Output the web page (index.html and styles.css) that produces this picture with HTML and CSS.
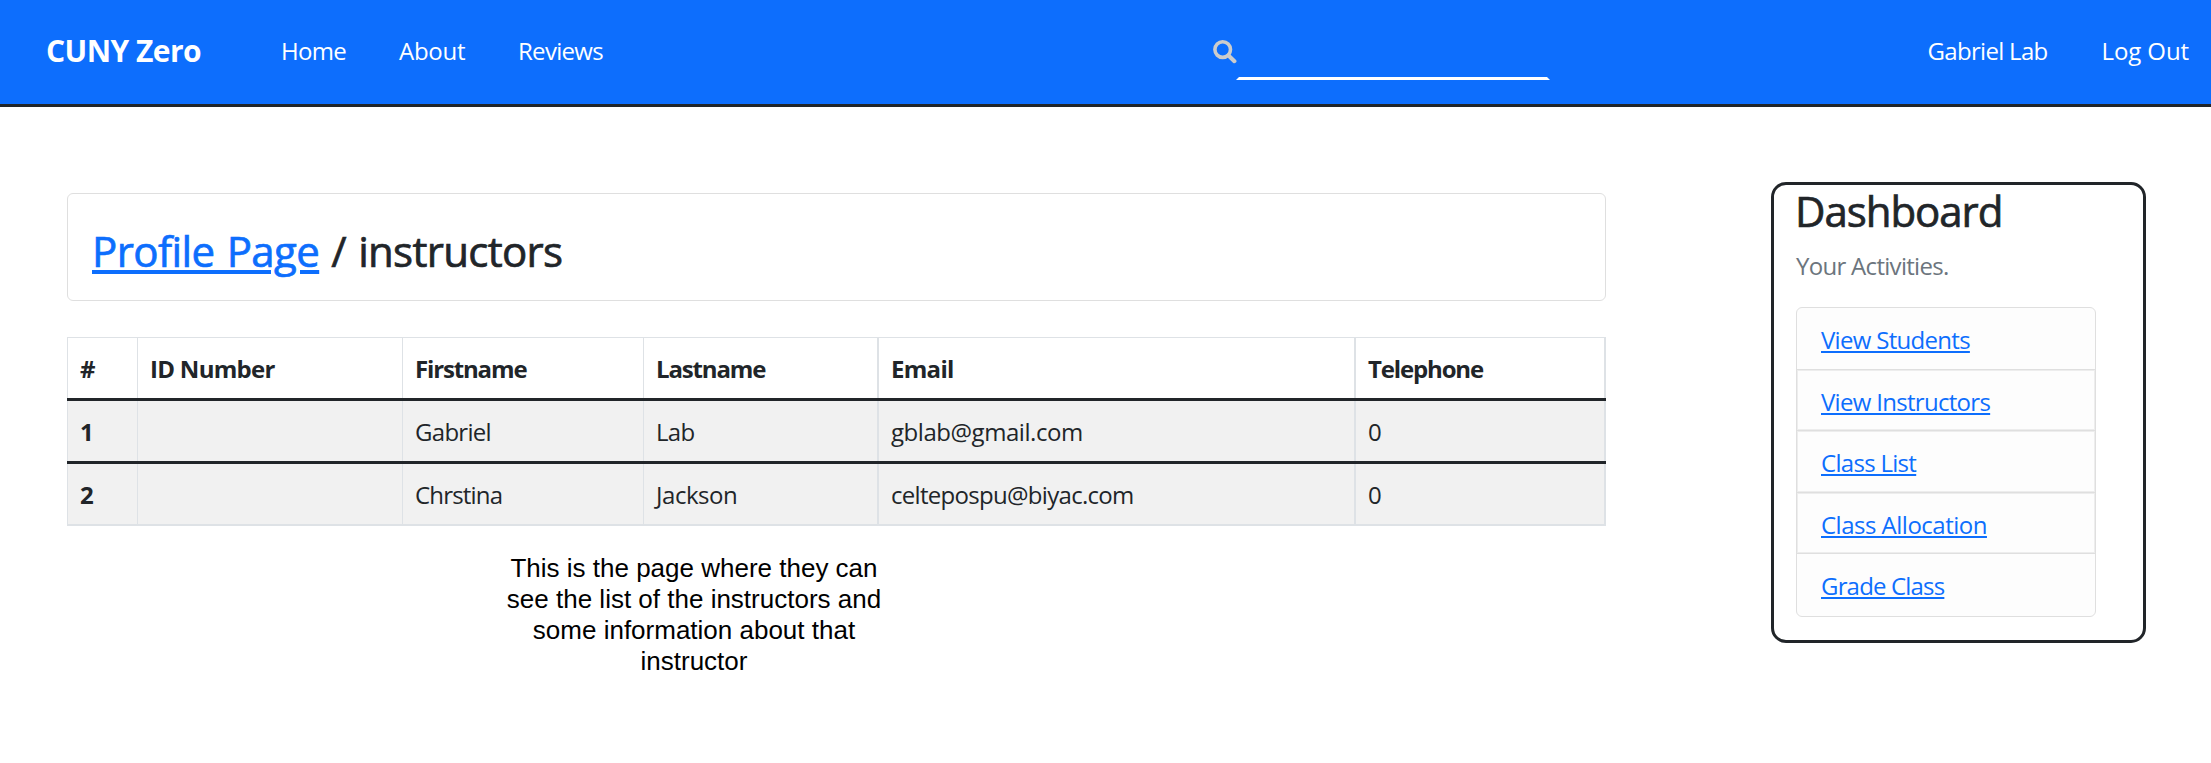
FILE: index.html
```html
<!DOCTYPE html>
<html lang="en">
<head>
<meta charset="utf-8">
<title>CUNY Zero - Instructors</title>
<link rel="stylesheet" href="styles.css">
</head>
<body>
<nav class="navbar">
  <a class="brand" href="#">CUNY Zero</a>
  <div class="nav-links">
    <a class="nav-home" href="#">Home</a>
    <a class="nav-about" href="#">About</a>
    <a href="#">Reviews</a>
  </div>
  <form class="search">
    <svg class="search-icon" viewBox="0 0 24 24" fill="none" stroke="#ccc"><circle cx="9.7" cy="9.6" r="7.8" stroke-width="3.6"/><path d="M15.5 15.5 21.4 21.2" stroke-width="4.1" stroke-linecap="round"/></svg>
    <input class="search-input" type="text" aria-label="Search">
  </form>
  <div class="nav-user">
    <a href="#">Gabriel Lab</a>
    <a class="nav-logout" href="#">Log Out</a>
  </div>
</nav>
<main class="page">
  <section class="content">
    <div class="card">
      <h3 class="heading"><a class="heading-link" href="#">Profile Page</a> / instructors</h3>
    </div>
    <div class="table" role="table">
      <div class="row head" role="row"><span>#</span><span class="id-head">ID Number</span><span>Firstname</span><span>Lastname</span><span class="email-head">Email</span><span>Telephone</span></div>
      <div class="row" role="row"><b>1</b><span></span><span>Gabriel</span><span>Lab</span><span class="mail">gblab@gmail.com</span><span>0</span></div>
      <div class="row" role="row"><b>2</b><span></span><span class="tight">Chrstina</span><span class="mail">Jackson</span><span>celtepospu@biyac.com</span><span>0</span></div>
    </div>
    <p class="note">This is the page where they can<br>see the list of the instructors and<br>some information about that<br>instructor</p>
  </section>
  <aside class="dashboard">
    <h3 class="title">Dashboard</h3>
    <p class="subtitle">Your Activities.</p>
    <ul class="activities">
      <li><a href="#">View Students</a></li>
      <li><a href="#">View Instructors</a></li>
      <li><a href="#">Class List</a></li>
      <li><a class="allocation" href="#">Class Allocation</a></li>
      <li><a class="tight" href="#">Grade Class</a></li>
    </ul>
  </aside>
</main>
</body>
</html>
```
FILE: styles.css
```css
* { box-sizing: border-box; }

body {
  margin: 0;
  background: #fff;
  color: #212529;
  font: 24px/36px "Open Sans", "Noto Sans", sans-serif;
  letter-spacing: -0.7px;
}

a { color: #0d6efd; text-underline-offset: 2px; text-decoration-thickness: 2px; }
h3, p, ul { margin: 0; padding: 0; }
.tight { letter-spacing: -0.82px; }

/* Navigation bar */
.navbar {
  display: flex;
  align-items: center;
  height: 107px;
  padding: 0 22px 2px 46px;
  background: #0d6efd;
  border-bottom: 3px solid #212529;
}
.navbar a { color: #fff; text-decoration: none; white-space: nowrap; }
.brand { width: 235px; font-size: 30px; font-weight: 700; letter-spacing: -0.55px; }
.nav-links { display: flex; width: 932px; }
.nav-home { width: 118px; }
.nav-about { width: 119px; }
.navbar .nav-about { letter-spacing: -0.25px; }
.search { display: flex; align-self: flex-start; height: 80px; }
.search-icon { width: 24px; height: 24px; margin-top: 40px; }
.search-input {
  width: 314px;
  height: 80px;
  margin-left: -1px;
  padding: 0;
  border: 3px solid transparent;
  border-bottom-color: #fff;
  background: transparent;
  color: #fff;
  font: inherit;
  outline: 0;
}
.nav-user { display: flex; gap: 54px; margin-left: auto; }
.navbar .nav-logout { letter-spacing: -0.1px; }

/* Page columns */
.page { display: flex; justify-content: space-between; align-items: flex-start; padding: 75px 65px 0 67px; }
.content { width: 1539px; padding-top: 11px; }

.card {
  height: 108px;
  padding: 32px 24px 0;
  border: 1px solid #dfdfdf;
  border-radius: 6px;
  background: #fff;
}
.heading, .title { font-size: 42px; line-height: 50px; font-weight: 500; -webkit-text-stroke: 0.7px currentColor; }
.heading { word-spacing: 1.9px; }
.heading-link { letter-spacing: -0.6px; text-underline-offset: 3px; text-decoration-thickness: 4px; }

/* Instructors table */
.table { margin-top: 36px; border: solid #dee2e6; border-width: 1px 0 2px; background: #fff; }
.row {
  display: grid;
  grid-template-columns: 71px 265px 241px 235px 477px 250px;
  height: 60px;
  background: #f1f1f1;
}
.row:not(:last-child) { height: 63px; border-bottom: 3px solid #212529; }
.row > * { padding: 12px 12px 0; line-height: 37px; border-right: 1px solid #dee2e6; }
.row > :first-child { border-left: 1px solid #dee2e6; }
.row > :nth-child(n+4) { border-right-width: 2px; }
.row.head { background: #fff; font-weight: 700; letter-spacing: -1.15px; }
.id-head, .email-head { letter-spacing: -0.7px; }
.mail { letter-spacing: -0.45px; }

.note {
  width: 400px;
  margin: 27px 0 0 427px;
  color: #000;
  font: 26px/31px "Liberation Sans", Arial, sans-serif;
  letter-spacing: 0;
  text-align: center;
}

/* Dashboard panel */
.dashboard {
  width: 375px;
  height: 461px;
  padding: 1px 47px 0 22px;
  border: 3px solid #212529;
  border-radius: 15px;
}
.title { letter-spacing: -1.05px; margin-left: -1px; }
.subtitle { margin: 12px 0 23px; color: #6c757d; }
.activities { list-style: none; border: 1px solid #dfdfdf; border-radius: 6px; background: #fdfdfd; }
.activities li { height: 61.5px; padding: 14px 24px 0; border-bottom: 1px solid #dfdfdf; }
.activities li:last-child { border-bottom: 0; }
.activities li:nth-child(2), .activities li:nth-child(3), .activities li:nth-child(4) { box-shadow: inset 0 0 0 1px #ededed; }
.activities .allocation { letter-spacing: -0.5px; }
```
